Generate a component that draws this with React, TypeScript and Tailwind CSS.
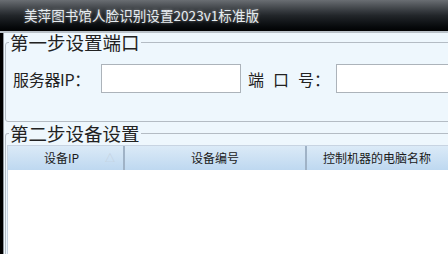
import React from "react";

const FONT = { fontFamily: '"Noto Sans CJK SC", "Liberation Sans", sans-serif' };

export default function App() {
  return (
    <div
      className="flex h-[254px] w-[448px] flex-col overflow-hidden bg-black"
      style={FONT}
    >
      {/* title bar */}
      <div className="flex h-[31px] shrink-0 items-center bg-gradient-to-b from-[#6a6e73] via-[#22262a] to-[#020304] pl-[24px]">
        <span className="text-[13.6px] leading-none text-[#e6ecf0] [text-shadow:0_0_3px_rgba(255,255,255,0.45)]">
          美萍图书馆人脸识别设置2023v1标准版
        </span>
      </div>
      <div className="h-[2px] shrink-0 bg-[#b9c1c8]" />

      {/* body */}
      <div className="flex min-h-0 flex-1 border-l-[3px] border-black">
        <div className="flex min-w-0 flex-1 flex-col border-l border-[#8f969d] bg-[#eef7fd] pl-[1px]">
          <fieldset className="-mr-6 mt-[-1px] h-[90px] shrink-0 rounded-[3px] border border-[#b4bcc4] pl-[1px]">
            <legend className="ml-[2px] px-[1px] text-[18.5px] leading-[20px] text-[#222]">
              第一步设置端口
            </legend>
            <div className="ml-[6px] mt-[12px] flex items-center text-[16px] text-[#222]">
              <span className="w-[88px] shrink-0 tracking-[-0.3px]">服务器IP：</span>
              <input className="h-[29px] w-[140px] shrink-0 border border-[#acb3ba] bg-white" />
              <span className="ml-[7px] flex w-[88px] shrink-0 gap-[9px]">
                <span>端</span>
                <span>口</span>
                <span>号：</span>
              </span>
              <input className="h-[29px] w-[140px] shrink-0 border border-[#acb3ba] bg-white" />
            </div>
          </fieldset>

          <fieldset className="-mr-6 mt-[1px] flex min-h-0 flex-1 flex-col rounded-t-[3px] border border-b-0 border-[#b4bcc4] pl-[1px]">
            <legend className="ml-[2px] px-[1px] text-[18.5px] leading-[20px] text-[#222]">
              第二步设备设置
            </legend>
            <div className="mt-[2px] flex min-h-0 flex-1 flex-col border-l border-t border-[#c8d4e2] bg-white">
              <div className="flex h-[24px] shrink-0 items-center bg-gradient-to-b from-[#dbeaf7] to-[#bed8f0] text-[12px] text-[#1a1a1a]">
                <div className="relative flex h-full w-[117px] shrink-0 items-center justify-center border-r-2 border-[#9fb2c6]">
                  <span className="-ml-[8px]">设备IP</span>
                  <span className="absolute right-[8px] top-[4px] text-[10px] text-[#c2cfdc]">△</span>
                </div>
                <div className="flex h-full w-[182px] shrink-0 items-center justify-center border-r-2 border-[#9fb2c6]">
                  设备编号
                </div>
                <div className="flex h-full flex-1 items-center whitespace-nowrap pl-[16px]">
                  控制机器的电脑名称
                </div>
              </div>
            </div>
          </fieldset>
        </div>
      </div>
    </div>
  );
}
